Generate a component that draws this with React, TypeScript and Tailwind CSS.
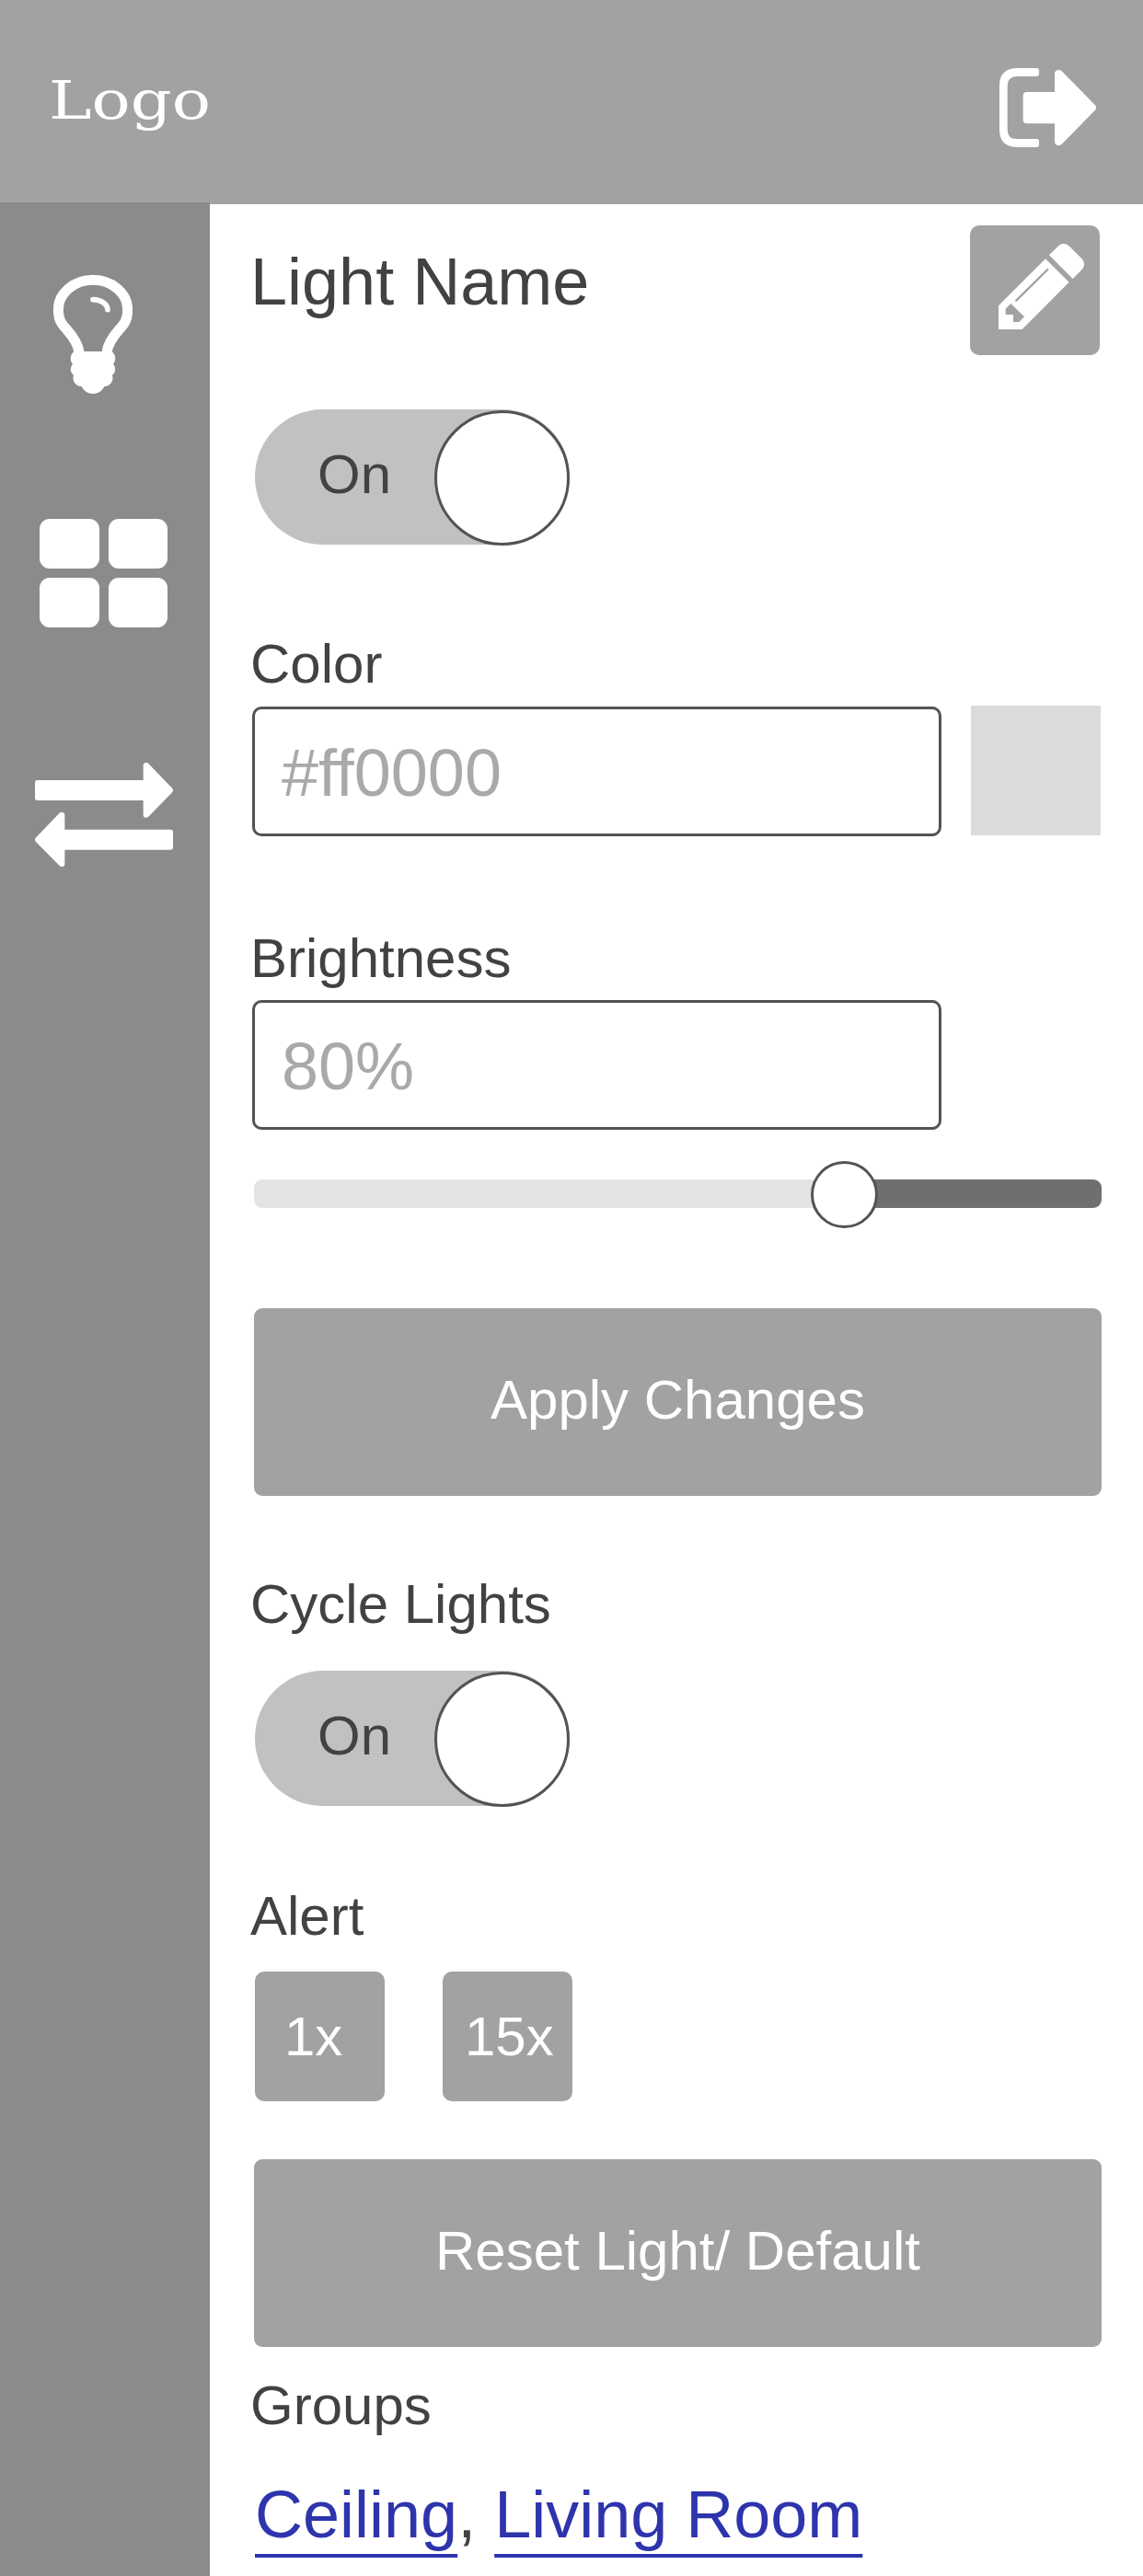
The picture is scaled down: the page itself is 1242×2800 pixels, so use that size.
import React from "react";

function LogoutIcon() {
  return (
    <svg width="105" height="86" viewBox="258 102 315 258" fill="#fff">
      <path d="M314 102H379Q387 102 387 110V121Q387 129 379 129H315Q284 130 284 161V302Q284 333 315 333H379Q387 333 387 341V352Q387 360 379 360H314Q258 358 258 303V159Q258 104 314 102Z" />
      <path d="M348 180H438V121C438 108 452 104 461 112L570 223Q577 231 570 239L461 350C452 358 438 354 438 341V283H348Q335 283 335 270V193Q335 180 348 180Z" />
    </svg>
  );
}

function BulbIcon() {
  return (
    <svg width="86" height="130" viewBox="174 894 258 390" fill="none">
      <path
        d="M258 1150C256 1128 240 1100 217 1074C200 1056 190 1042 190 1010C190 957 240 913 303 913C366 913 416 957 416 1010C416 1042 406 1056 389 1074C366 1100 350 1128 348 1150"
        stroke="#fff"
        strokeWidth="33"
      />
      <path d="M303 977C330 978 350 991 351 1010" stroke="#fff" strokeWidth="17" strokeLinecap="round" />
      <path
        d="M242 1146H364C378 1155 379 1176 369 1187C379 1199 377 1215 366 1223C372 1243 359 1259 340 1260C333 1275 319 1284 303 1284C287 1284 273 1275 266 1260C247 1259 234 1243 240 1223C229 1215 227 1199 237 1187C227 1176 228 1155 242 1146Z"
        fill="#fff"
      />
    </svg>
  );
}

function GridIcon() {
  return (
    <div className="grid h-[118px] w-[139px] grid-cols-2 gap-x-[10px] gap-y-[10px]">
      <span className="rounded-[11px] bg-white" />
      <span className="rounded-[11px] bg-white" />
      <span className="rounded-[11px] bg-white" />
      <span className="rounded-[11px] bg-white" />
    </div>
  );
}

function SwapIcon() {
  return (
    <svg width="150" height="114" viewBox="114 867 450 342" fill="#fff">
      <path d="M121 924H467V876C467 867 478 864 484 870L562 951Q566 957 562 963L484 1043C478 1049 467 1047 467 1038V990H121Q114 990 114 983V931Q114 924 121 924Z" />
      <path d="M557 1085H211V1037C211 1028 200 1025 194 1031L116 1112Q112 1118 116 1124L194 1203C200 1209 211 1207 211 1198V1151H557Q564 1151 564 1144V1092Q564 1085 557 1085Z" />
    </svg>
  );
}

function PencilIcon() {
  return (
    <svg width="93" height="94" viewBox="255 672 279 282">
      <path
        d="M420 712L449 683Q467 666 486 683L526 723Q542 740 527 759L497 789Z"
        fill="#fff"
      />
      <path d="M408 724L485 800L332 954H255V877Z" fill="#fff" />
      <path d="M295 870L339 913L322 930H303V906H278V887Z" fill="#a2a2a2" />
      <path d="M313 860L415 759" stroke="#a2a2a2" strokeWidth="7" strokeLinecap="round" />
    </svg>
  );
}

function Toggle({ className }: { className: string }) {
  return (
    <button
      className={`relative ml-[5px] flex h-[147px] w-[342px] shrink-0 items-center rounded-full bg-[#c1c1c1] pb-[5px] pl-[68px] text-[60px] leading-[68px] ${className}`}
    >
      On
      <span className="absolute top-[1px] right-0 size-[147px] rounded-full border-[3px] border-[#535353] bg-white" />
    </button>
  );
}

function Label({ className, children }: { className: string; children: React.ReactNode }) {
  return <h2 className={`shrink-0 text-[60px] leading-[68px] ${className}`}>{children}</h2>;
}

function Field({ placeholder }: { placeholder: string }) {
  return (
    <input
      placeholder={placeholder}
      className="ml-[2px] h-[141px] w-[749px] shrink-0 rounded-[10px] border-[3px] border-[#535353] bg-white pt-[3px] pl-[29px] text-[72px] placeholder:text-[#a9a9a9] placeholder:opacity-100"
    />
  );
}

function WideButton({ className, children }: { className: string; children: React.ReactNode }) {
  return (
    <button
      className={`ml-1 flex h-[204px] w-[921px] shrink-0 items-center justify-center rounded-[9px] bg-[#a2a2a2] pb-[4px] text-[60px] leading-[68px] text-white ${className}`}
    >
      {children}
    </button>
  );
}

const linkClass =
  "text-[#2e34ac] underline decoration-[3.5px] underline-offset-[18px] [text-decoration-skip-ink:none]";

export default function App() {
  return (
    <div className="flex h-[2800px] w-[1242px] flex-col overflow-hidden bg-white font-['Liberation_Sans',Arial,sans-serif] text-[#424242]">
      <header className="flex h-[222px] shrink-0 items-start justify-between bg-[#a2a2a2] pr-[51px] pl-[53px]">
        <span className="mt-[74px] origin-left scale-x-[1.21] font-['DejaVu_Serif',serif] text-[58px] leading-[70px] text-white">
          Logo
        </span>
        <button className="mt-[74px]">
          <LogoutIcon />
        </button>
      </header>

      <div className="flex min-h-0 flex-1">
        <nav className="-mt-[2px] flex w-[228px] shrink-0 flex-col items-start bg-[#8b8b8b] pt-[78px]">
          <button className="ml-[58px]">
            <BulbIcon />
          </button>
          <button className="mt-[136px] ml-[43px]">
            <GridIcon />
          </button>
          <button className="mt-[147px] ml-[38px]">
            <SwapIcon />
          </button>
        </nav>

        <main className="flex min-w-0 flex-1 flex-col pt-[23px] pl-[44px]">
          <div className="flex h-[141px] shrink-0 items-start justify-between pr-[47px]">
            <h1 className="mt-[21px] text-[72px] leading-[80px]">Light Name</h1>
            <button className="flex size-[141px] items-start rounded-[10px] bg-[#a2a2a2] pt-[19px] pl-[31px]">
              <PencilIcon />
            </button>
          </div>

          <Toggle className="mt-[59px]" />

          <Label className="mt-[96px]">Color</Label>
          <div className="mt-[11px] flex h-[142px] shrink-0 items-end">
            <Field placeholder="#ff0000" />
            <span className="ml-[32px] size-[141px] self-start bg-[#dbdbdb]" />
          </div>

          <Label className="mt-[99px]">Brightness</Label>
          <div className="mt-[11px] flex h-[141px] shrink-0">
            <Field placeholder="80%" />
          </div>

          <div className="relative mt-[54px] ml-1 flex h-[31px] w-[921px] shrink-0">
            <span className="w-[641px] rounded-l-[9px] bg-[#e4e4e4]" />
            <span className="flex-1 rounded-r-[9px] bg-[#6f6f6f]" />
            <span className="absolute -top-[20px] left-[605px] size-[73px] rounded-full border-[3px] border-[#535353] bg-white" />
          </div>

          <WideButton className="mt-[109px]">Apply Changes</WideButton>

          <Label className="mt-[84px]">Cycle Lights</Label>
          <Toggle className="mt-[38px]" />

          <Label className="mt-[86px]">Alert</Label>
          <div className="mt-[26px] ml-[5px] flex shrink-0 gap-[63px] text-[60px] leading-[68px] text-white">
            <button className="flex size-[141px] items-center rounded-[10px] bg-[#a2a2a2] pl-[32px]">1x</button>
            <button className="flex size-[141px] items-center rounded-[10px] bg-[#a2a2a2] pl-[24px]">15x</button>
          </div>

          <WideButton className="mt-[63px]">Reset Light/ Default</WideButton>

          <Label className="mt-[30px]">Groups</Label>
          <p className="mt-[44px] ml-[5px] shrink-0 text-[72px] leading-[80px]">
            <a href="#ceiling" className={linkClass}>Ceiling</a>
            {", "}
            <a href="#living-room" className={linkClass}>Living Room</a>
          </p>
        </main>
      </div>
    </div>
  );
}
